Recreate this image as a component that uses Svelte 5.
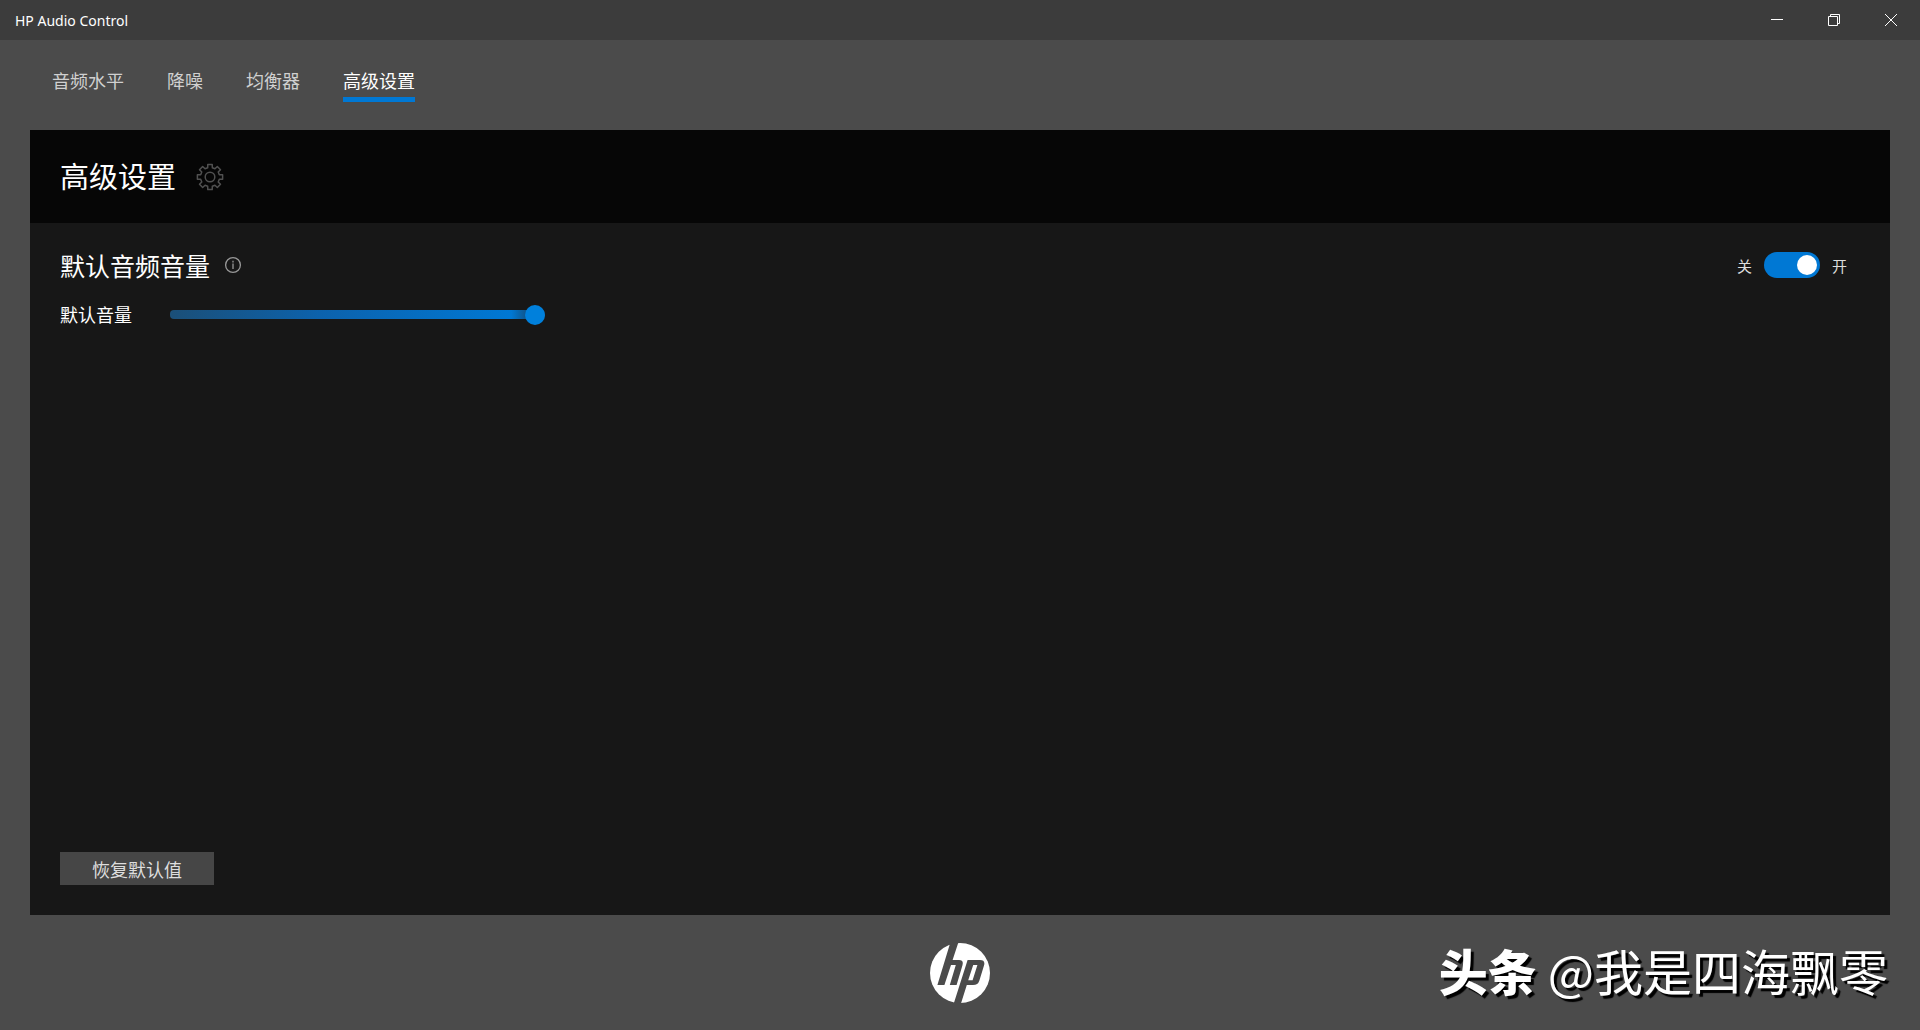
<script>
	const tabs = ["音频水平", "降噪", "均衡器", "高级设置"]

	let active = $state("高级设置")
	let enabled = $state(true)
	let volume = $state(100)

	// gear outline: eight teeth around the center
	const gear = (() => {
		const points = []
		for (let i = 0; i < 8; i++) {
			for (const [offset, r] of [
				[-14, 9.6],
				[-10, 12.8],
				[10, 12.8],
				[14, 9.6],
			]) {
				const a = ((i * 45 + offset) * Math.PI) / 180
				points.push(
					`${(14 + r * Math.sin(a)).toFixed(2)} ${(14 - r * Math.cos(a)).toFixed(2)}`,
				)
			}
		}
		return `M${points.join("L")}Z`
	})()

	function reset() {
		enabled = true
		volume = 100
	}
</script>

<div class="window">
	<header class="titlebar">
		<span class="app-name">HP Audio Control</span>
		<div class="window-buttons">
			<button aria-label="最小化">
				<svg width="12" height="12" viewBox="0 0 12 12">
					<path d="M0 5.5H12" />
				</svg>
			</button>
			<button aria-label="还原">
				<svg width="12" height="12" viewBox="0 0 12 12">
					<path d="M.5 2.5H9.5V11.5H.5ZM2.5 2.5V.5H11.5V9.5H9.5" />
				</svg>
			</button>
			<button aria-label="关闭">
				<svg width="12" height="12" viewBox="0 0 12 12">
					<path d="M0 0L12 12M12 0L0 12" />
				</svg>
			</button>
		</div>
	</header>

	<nav class="tabs">
		{#each tabs as tab}
			<button
				class="tab"
				class:active={active === tab}
				onclick={() => (active = tab)}>{tab}</button
			>
		{/each}
	</nav>

	<main class="panel">
		<div class="panel-header">
			<h1>高级设置</h1>
			<svg class="gear" width="28" height="28" viewBox="0 0 28 28">
				<path d={gear} />
				<circle cx="14" cy="14" r="4.8" />
			</svg>
		</div>

		<div class="panel-body">
			<div class="section-row">
				<h2>默认音频音量</h2>
				<svg class="info" width="18" height="18" viewBox="0 0 18 18">
					<circle cx="9" cy="9" r="7.4" />
					<path d="M9 7.6V13M9 4.8V6.4" />
				</svg>
				<label class="toggle">
					<span>关</span>
					<input
						type="checkbox"
						role="switch"
						aria-label="默认音频音量"
						bind:checked={enabled}
					/>
					<span>开</span>
				</label>
			</div>

			<div class="slider-row">
				<label for="volume">默认音量</label>
				<input id="volume" type="range" min="0" max="100" bind:value={volume} />
			</div>

			<button class="reset" onclick={reset}>恢复默认值</button>
		</div>
	</main>

	<footer class="footer">
		<svg class="logo" width="60" height="60" viewBox="0 0 60 60">
			<circle cx="30" cy="30" r="30" />
			<path
				d="M20.5 -1H28.5L22.6 17H29Q34 17 32.4 22.4L26.6 42H19.8L25.8 22H21L14.4 42H7.4Z"
			/>
			<path
				fill-rule="evenodd"
				d="M37.6 17H50Q55.6 17 54 22.6L49.4 37.4Q48 42 43 42H36.8L30.8 61H23.6ZM43.2 22L38.2 37.2H42.6L47.4 22Z"
			/>
		</svg>
		<div class="signature"><strong>头条</strong> @我是四海飘零</div>
	</footer>
</div>

<style>
	:global(body) {
		margin: 0;
		background: #4b4b4b;
	}

	.window {
		display: flex;
		flex-direction: column;
		min-height: 100vh;
		background: #4b4b4b;
		color: #fff;
		font-family: "Open Sans", "Noto Sans CJK SC", sans-serif;
	}

	button {
		padding: 0;
		border: none;
		background: none;
		color: inherit;
		font-family: inherit;
		cursor: pointer;
	}

	h1,
	h2 {
		margin: 0;
		font-weight: 400;
	}

	.titlebar {
		display: flex;
		align-items: center;
		justify-content: space-between;
		height: 40px;
		padding: 0 1px 0 15px;
		background: #3c3c3c;
	}

	.app-name {
		font-family: "Noto Sans", sans-serif;
		font-size: 14px;
	}

	.window-buttons {
		display: flex;
		height: 100%;
	}

	.window-buttons button {
		display: flex;
		align-items: center;
		justify-content: center;
		width: 57px;
	}

	.window-buttons path {
		fill: none;
		stroke: #fff;
	}

	.tabs {
		display: flex;
		align-items: flex-start;
		gap: 43px;
		height: 62px;
		padding: 28px 52px 0;
	}

	.tab {
		padding-bottom: 2px;
		border-bottom: 5px solid transparent;
		color: #d0d0d0;
		font-size: 18px;
		line-height: 27px;
	}

	.tab.active {
		border-color: #0078d4;
		color: #fff;
	}

	.panel {
		display: flex;
		flex: 1;
		flex-direction: column;
		margin: 0 30px;
		background: #171717;
	}

	.panel-header {
		display: flex;
		align-items: center;
		gap: 20px;
		height: 93px;
		padding: 0 30px;
		background: #060606;
	}

	h1 {
		font-size: 29px;
		line-height: 40px;
	}

	.gear {
		fill: none;
		stroke: #505050;
		stroke-width: 1.5;
		stroke-linejoin: round;
	}

	.panel-body {
		display: flex;
		flex: 1;
		flex-direction: column;
		padding: 23px 30px 30px;
	}

	.section-row {
		display: flex;
		align-items: center;
		height: 38px;
	}

	h2 {
		font-size: 25px;
	}

	.info {
		margin-left: 14px;
		fill: none;
		stroke: #999;
		stroke-width: 1.3;
	}

	.toggle {
		display: flex;
		align-items: center;
		gap: 12px;
		margin-left: auto;
		padding-right: 13px;
		color: #ddd;
		font-size: 15px;
	}

	.toggle input {
		appearance: none;
		display: flex;
		align-items: center;
		width: 56px;
		height: 26px;
		margin: 0;
		padding: 0 3px;
		border-radius: 13px;
		background: #555;
	}

	.toggle input::before {
		content: "";
		width: 20px;
		height: 20px;
		border-radius: 50%;
		background: #fff;
	}

	.toggle input:checked {
		justify-content: flex-end;
		background: #0078d4;
	}

	.slider-row {
		display: flex;
		align-items: center;
		gap: 38px;
		height: 30px;
		margin-top: 15px;
		font-size: 18px;
	}

	.slider-row input {
		appearance: none;
		width: 375px;
		height: 20px;
		margin: 0;
		background: none;
	}

	.slider-row input::-webkit-slider-runnable-track {
		height: 9px;
		border-radius: 4px;
		background: linear-gradient(
			90deg,
			#1b4f78,
			#0c62ac 40%,
			#0078d4 91%,
			#174468 97%
		);
	}

	.slider-row input::-webkit-slider-thumb {
		appearance: none;
		width: 20px;
		height: 20px;
		margin-top: -5px;
		border-radius: 50%;
		background: #0080dc;
	}

	.reset {
		align-self: flex-start;
		width: 154px;
		height: 33px;
		margin-top: auto;
		background: #464646;
		color: #ddd;
		font-size: 18px;
	}

	.footer {
		display: grid;
		grid-template-columns: 1fr auto 1fr;
		align-items: center;
		height: 115px;
		padding: 0 32px;
	}

	.logo {
		grid-column: 2;
		fill: #4b4b4b;
	}

	.logo circle {
		fill: #fff;
	}

	.signature {
		justify-self: end;
		padding-bottom: 6px;
		font-family: "Noto Sans CJK SC", sans-serif;
		font-size: 49px;
		white-space: nowrap;
		text-shadow: 3px 3px 1px #000;
	}

	.signature strong {
		font-weight: 900;
	}
</style>
